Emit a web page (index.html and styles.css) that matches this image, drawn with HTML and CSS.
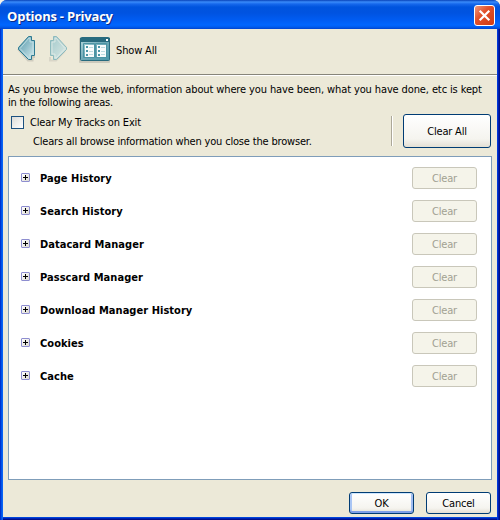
FILE: index.html
```
<!DOCTYPE html>
<html lang="en">
<head>
<meta charset="utf-8">
<title>Options - Privacy</title>
<link rel="stylesheet" href="styles.css">
</head>
<body>
<div class="window">
  <header class="titlebar">
    <h1>Options - Privacy</h1>
    <button class="close" aria-label="Close"><svg width="21" height="21" viewBox="0 0 21 21"><path d="M5.7 5.7l9.6 9.6M15.3 5.7l-9.6 9.6" stroke="#fff" stroke-width="2.2"/></svg></button>
  </header>
  <main class="client">
    <nav class="toolbar">
      <svg class="arrows" width="56" height="32" viewBox="0 0 56 32">
        <defs>
          <linearGradient id="back" x1="0" y1="0" x2="1" y2="1"><stop offset="0" stop-color="#5b9dad"/><stop offset=".45" stop-color="#8cbcc8"/><stop offset="1" stop-color="#d8ecee"/></linearGradient>
          <linearGradient id="next" x1="0" y1="0" x2="1" y2="1"><stop offset="0" stop-color="#a3c9cc"/><stop offset="1" stop-color="#dbe9e4"/></linearGradient>
        </defs>
        <path d="M3 17L13 28.500H17.500V25H20" fill="none" stroke="#cfccbe" stroke-width="2"/>
        <path d="M3.500 15.500L13.500 4.500H16.500V8.500H19.500V23.500H16.500V27.500H13.500L3.500 17.500Z" fill="url(#back)" stroke="#2d7a91"/>
        <path d="M5 16.500L14 6H15V10H18V22H15V26H14Z" fill="none" stroke="#c4e2e6" stroke-opacity=".85"/>
        <path d="M35 25V28.500H41L50 19" fill="none" stroke="#d9d6c8" stroke-width="2"/>
        <path d="M51.500 15.500L41.500 4.500H38.500V8.500H35.500V23.500H38.500V27.500H41.500L51.500 17.500Z" fill="url(#next)" stroke="#8dbabd"/>
        <path d="M50 16.500L41 6H40V10H37V22H40V26H41Z" fill="none" stroke="#e4eee8" stroke-opacity=".8"/>
      </svg>
      <svg class="panes" width="32" height="26" viewBox="0 0 32 26">
        <defs><linearGradient id="pane" x1="0" y1="0" x2="1" y2="1"><stop offset="0" stop-color="#b6d8dd"/><stop offset=".5" stop-color="#70abb8"/><stop offset="1" stop-color="#4b97a8"/></linearGradient></defs>
        <rect x="0" y="1" width="31" height="25" rx="1" fill="#cbc9bc"/>
        <rect x="1.500" y=".5" width="29" height="23" rx="1" fill="url(#pane)" stroke="#286b7e"/>
        <path d="M1 1H31V5H1Z" fill="#286b7e"/>
        <path d="M27 2h2v2h-2z" fill="#fff"/>
        <path d="M4.500 6.500h11v14h-11zM16.500 6.500h11v14h-11z" fill="none" stroke="#4c94a4"/>
        <path d="M6 8h9v12H6zM18 8h9v12h-9z" fill="#f8fcfc"/>
        <path d="M7 10h2m-2 4h2m-2 4h2M19 10h2m-2 4h2m-2 4h2" stroke="#4b97a8" stroke-width="2"/>
        <path d="M10 10.500h4m-4 4h4m-4 3h4M22 10.500h4m-4 4h4m-4 3h4" stroke="#bcdbe0"/>
      </svg>
      <span class="show-all">Show All</span>
    </nav>
    <section class="intro">
      <p><span class="first-line">As you browse the web, information about where you have been, what you have done, etc is kept</span><br><span class="second-line">in the following areas.</span></p>
    </section>
    <section class="exit">
      <div class="exit-copy">
        <label><i class="checkbox"></i><span>Clear My Tracks on Exit</span></label>
        <p>Clears all browse information when you close the browser.</p>
      </div>
      <div class="divider"></div>
      <button class="btn clear-all">Clear All</button>
    </section>
    <ul class="areas">
      <li><i class="plus"></i><b>Page History</b><button class="btn off" disabled>Clear</button></li>
      <li><i class="plus"></i><b>Search History</b><button class="btn off" disabled>Clear</button></li>
      <li><i class="plus"></i><b>Datacard Manager</b><button class="btn off" disabled>Clear</button></li>
      <li><i class="plus"></i><b>Passcard Manager</b><button class="btn off" disabled>Clear</button></li>
      <li><i class="plus"></i><b>Download Manager History</b><button class="btn off" disabled>Clear</button></li>
      <li><i class="plus"></i><b>Cookies</b><button class="btn off" disabled>Clear</button></li>
      <li><i class="plus"></i><b>Cache</b><button class="btn off" disabled>Clear</button></li>
    </ul>
    <footer class="actions">
      <button class="btn ok">OK</button>
      <button class="btn">Cancel</button>
    </footer>
  </main>
</div>
</body>
</html>
```
FILE: styles.css
```
* { box-sizing: border-box; }
body { margin: 0; background: #f4f2ea; overflow: hidden; }
.window {
  width: 500px; height: 520px; padding: 0 3px 3px; border-radius: 7px 7px 0 0; overflow: hidden;
  font: 11px/13px "DejaVu Sans Condensed", "DejaVu Sans", sans-serif; color: #000; white-space: nowrap;
  background: linear-gradient(90deg, #0033cf 0 1px, #0055e8 1px 2px, #0a62f5 2px 3px, transparent 3px 497px, #0036d8 497px 498px, #001fb0 498px 499px, #00108c 499px), linear-gradient(0deg, #00108c 0 1px, #0022b4 1px 2px, #0046dc 2px 3px, #0050e8 3px);
}
.titlebar {
  display: flex; align-items: center; justify-content: space-between; height: 29px; margin: 0 -3px; padding: 3px 5px 0 7px;
  background: linear-gradient(#0842b8 0, #3a8bfa 2px, #1668ec 4px, #0054de 7px, #0053e1 13px, #005cf2 20px, #0066ff 25px, #005cee 27px, #0043cf 29px);
}
h1 { margin: 0; color: #fff; font: bold 13px/20px "Open Sans", sans-serif; letter-spacing: -.22px; text-shadow: 1px 1px #0a2a85; }
.close { width: 21px; height: 21px; margin-top: -1px; padding: 0; border: 1px solid #fff; border-radius: 3px; background: linear-gradient(135deg, #ee987c, #e2512b 40%, #cf3b12); }
.close svg { display: block; margin: -1px; }
.client { height: 488px; background: #ece9d8; }
.toolbar { display: flex; height: 47px; padding: 3px 0 0 12px; border-bottom: 1px solid #fff; box-shadow: inset 0 -1px #87857a; }
.panes { margin: 5px 0 0 8px; }
.show-all { margin: 12px 0 0 5px; letter-spacing: -.15px; }
.intro { height: 40px; padding: 7px 0 0 5px; }
.first-line { letter-spacing: -.118px; }
.second-line { letter-spacing: -.2px; }
p { margin: 0; }
.exit { display: flex; height: 40px; }
.exit-copy { width: 388px; padding-left: 8px; }
label { display: flex; gap: 6px; height: 13px; align-items: center; letter-spacing: -.17px; }
.checkbox { width: 13px; height: 13px; border: 1px solid #1c5180; background: linear-gradient(135deg, #dcdcd7, #fff); }
.exit-copy p { padding: 6px 0 0 22px; letter-spacing: -.175px; }
.divider { width: 2px; height: 30px; border-left: 1px solid #aca899; border-right: 1px solid #fff; }
.btn {
  width: 65px; height: 22px; padding: 0; border: 1px solid #003c74; border-radius: 3px; color: #000; font: inherit; letter-spacing: -.2px;
  background: linear-gradient(#fff, #f5f4ef 75%, #e3dfd4);
}
.clear-all { width: 88px; height: 34px; margin: -2px 0 0 10px; }
.areas { height: 324px; margin: 0 5px; padding: 10px 14px 0 12px; border: 1px solid #7f9db9; background: #fff; list-style: none; }
.areas li { display: flex; align-items: center; height: 22px; margin-bottom: 11px; letter-spacing: .04px; }
.plus {
  width: 9px; height: 9px; margin: -1px 10px 0 0; border: 1px solid #8e8ed0; border-radius: 1px;
  background: linear-gradient(#000, #000) center / 5px 1px no-repeat, linear-gradient(#000, #000) center / 1px 5px no-repeat, linear-gradient(135deg, #fff, #dcdad0);
}
.off { margin-left: auto; color: #a1a192; border-color: #c9c7ba; background: #f5f4ea; }
.actions { display: flex; justify-content: flex-end; gap: 12px; padding: 12px 6px 0 0; }
.ok { box-shadow: inset 0 1px #cee7ff, inset 0 -2px #7f9fe8, inset 2px 0 #a9c5f4, inset -2px 0 #a0bdf0; }
```
